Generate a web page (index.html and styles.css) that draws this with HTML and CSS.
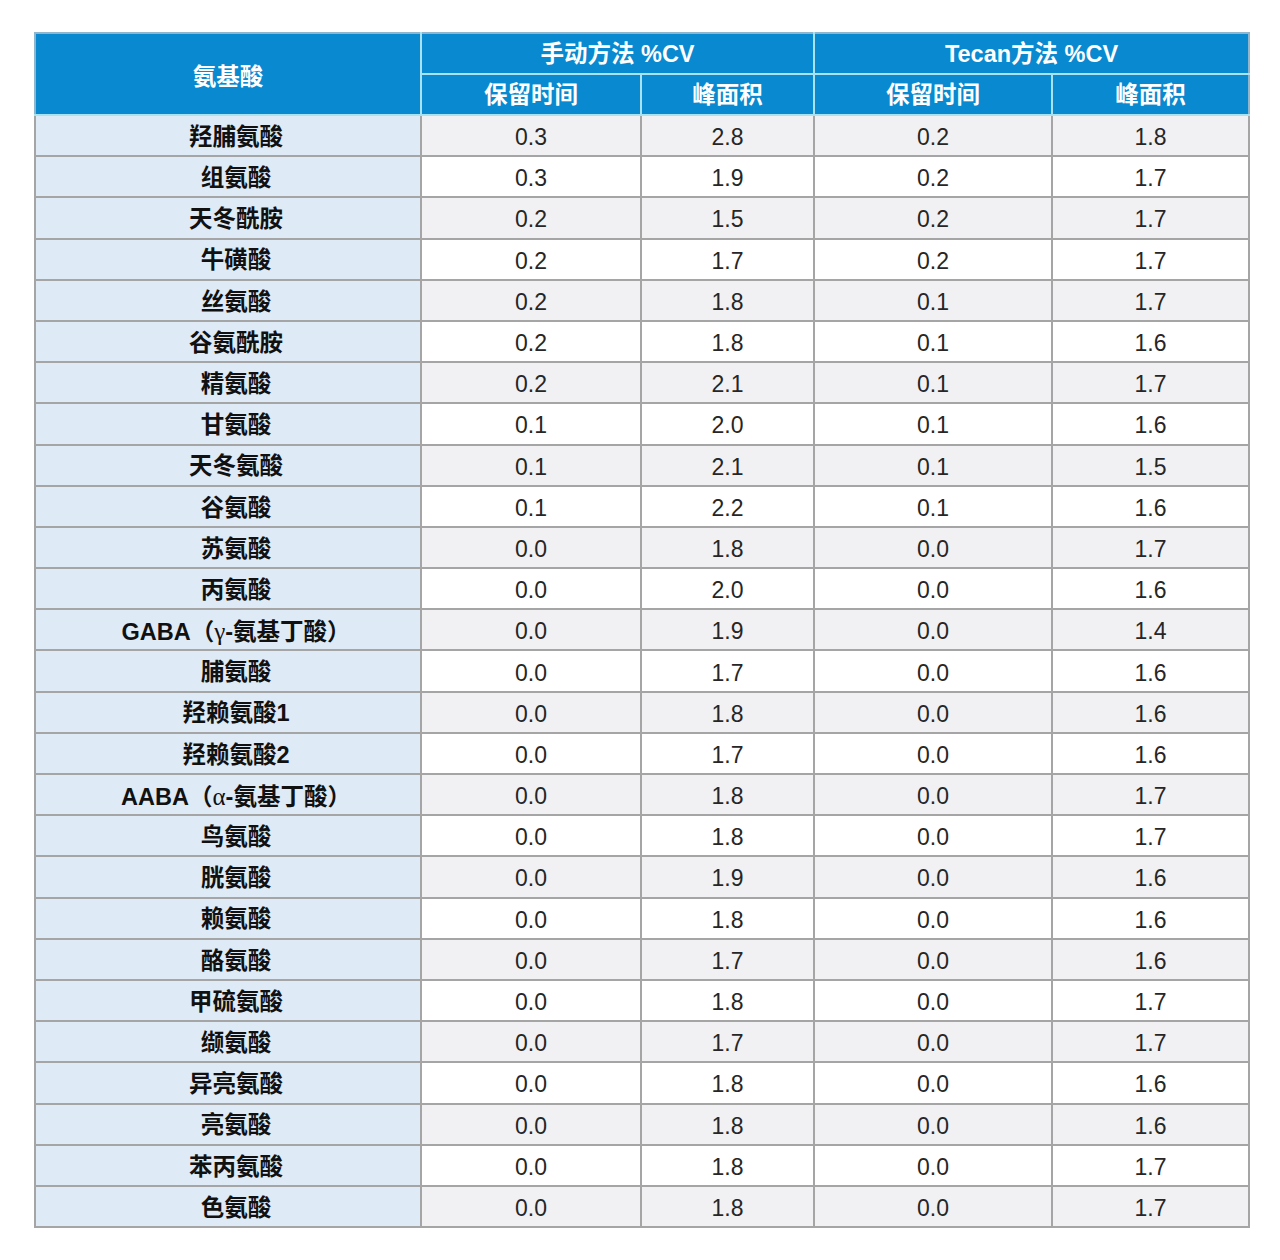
FILE: index.html
```html
<!DOCTYPE html>
<html lang="zh-CN">
<head>
<meta charset="utf-8">
<title>氨基酸 %CV</title>
<link rel="stylesheet" href="styles.css">
</head>
<body>
<table class="cv-table">
  <colgroup>
    <col class="c-name"><col class="c-a"><col class="c-b"><col class="c-c"><col class="c-d">
  </colgroup>
  <thead>
    <tr>
      <th rowspan="2" class="head-name">氨基酸</th>
      <th colspan="2">手动方法 %CV</th>
      <th colspan="2">Tecan方法 %CV</th>
    </tr>
    <tr>
      <th>保留时间</th><th>峰面积</th><th>保留时间</th><th>峰面积</th>
    </tr>
  </thead>
  <tbody>
    <tr><td class="name">羟脯氨酸</td><td>0.3</td><td>2.8</td><td>0.2</td><td>1.8</td></tr>
    <tr><td class="name">组氨酸</td><td>0.3</td><td>1.9</td><td>0.2</td><td>1.7</td></tr>
    <tr><td class="name">天冬酰胺</td><td>0.2</td><td>1.5</td><td>0.2</td><td>1.7</td></tr>
    <tr><td class="name">牛磺酸</td><td>0.2</td><td>1.7</td><td>0.2</td><td>1.7</td></tr>
    <tr><td class="name">丝氨酸</td><td>0.2</td><td>1.8</td><td>0.1</td><td>1.7</td></tr>
    <tr><td class="name">谷氨酰胺</td><td>0.2</td><td>1.8</td><td>0.1</td><td>1.6</td></tr>
    <tr><td class="name">精氨酸</td><td>0.2</td><td>2.1</td><td>0.1</td><td>1.7</td></tr>
    <tr><td class="name">甘氨酸</td><td>0.1</td><td>2.0</td><td>0.1</td><td>1.6</td></tr>
    <tr><td class="name">天冬氨酸</td><td>0.1</td><td>2.1</td><td>0.1</td><td>1.5</td></tr>
    <tr><td class="name">谷氨酸</td><td>0.1</td><td>2.2</td><td>0.1</td><td>1.6</td></tr>
    <tr><td class="name">苏氨酸</td><td>0.0</td><td>1.8</td><td>0.0</td><td>1.7</td></tr>
    <tr><td class="name">丙氨酸</td><td>0.0</td><td>2.0</td><td>0.0</td><td>1.6</td></tr>
    <tr><td class="name">GABA（<span class="greek">γ</span>-氨基丁酸）</td><td>0.0</td><td>1.9</td><td>0.0</td><td>1.4</td></tr>
    <tr><td class="name">脯氨酸</td><td>0.0</td><td>1.7</td><td>0.0</td><td>1.6</td></tr>
    <tr><td class="name">羟赖氨酸1</td><td>0.0</td><td>1.8</td><td>0.0</td><td>1.6</td></tr>
    <tr><td class="name">羟赖氨酸2</td><td>0.0</td><td>1.7</td><td>0.0</td><td>1.6</td></tr>
    <tr><td class="name">AABA（<span class="greek">α</span>-氨基丁酸）</td><td>0.0</td><td>1.8</td><td>0.0</td><td>1.7</td></tr>
    <tr><td class="name">鸟氨酸</td><td>0.0</td><td>1.8</td><td>0.0</td><td>1.7</td></tr>
    <tr><td class="name">胱氨酸</td><td>0.0</td><td>1.9</td><td>0.0</td><td>1.6</td></tr>
    <tr><td class="name">赖氨酸</td><td>0.0</td><td>1.8</td><td>0.0</td><td>1.6</td></tr>
    <tr><td class="name">酪氨酸</td><td>0.0</td><td>1.7</td><td>0.0</td><td>1.6</td></tr>
    <tr><td class="name">甲硫氨酸</td><td>0.0</td><td>1.8</td><td>0.0</td><td>1.7</td></tr>
    <tr><td class="name">缬氨酸</td><td>0.0</td><td>1.7</td><td>0.0</td><td>1.7</td></tr>
    <tr><td class="name">异亮氨酸</td><td>0.0</td><td>1.8</td><td>0.0</td><td>1.6</td></tr>
    <tr><td class="name">亮氨酸</td><td>0.0</td><td>1.8</td><td>0.0</td><td>1.6</td></tr>
    <tr><td class="name">苯丙氨酸</td><td>0.0</td><td>1.8</td><td>0.0</td><td>1.7</td></tr>
    <tr><td class="name">色氨酸</td><td>0.0</td><td>1.8</td><td>0.0</td><td>1.7</td></tr>
  </tbody>
</table>
</body>
</html>
```

FILE: styles.css
```css
html, body {
  margin: 0;
  padding: 0;
  background: #ffffff;
}

body {
  padding: 32px 0 0 34px;
  font-family: "Liberation Sans", Arial, "Noto Sans CJK SC", sans-serif;
}

.cv-table {
  border-collapse: collapse;
  table-layout: fixed;
  width: 1214px;
}

.c-name { width: 386px; }
.c-a { width: 220px; }
.c-b { width: 173px; }
.c-c { width: 238px; }
.c-d { width: 197px; }

.cv-table thead tr {
  height: 41px;
}

.cv-table th {
  background: #0989d0;
  color: #ffffff;
  font-family: "Liberation Sans", Arial, "Noto Sans CJK SC", sans-serif;
  font-weight: bold;
  font-size: 23.5px;
  line-height: 1;
  padding: 3px 0 0 0;
  text-align: center;
  vertical-align: middle;
  border: 2px solid #a9e3f2;
  border-top-color: #8fb6cc;
}

.cv-table th.head-name {
  padding-top: 8px;
  border-left-color: #8fb6cc;
}

.cv-table thead tr:first-child th:last-child,
.cv-table thead tr:last-child th:last-child {
  border-right-color: #8fb6cc;
}

.cv-table tbody tr {
  height: 41.2px;
}

.cv-table td {
  padding: 4px 0 0 0;
  text-align: center;
  vertical-align: middle;
  font-size: 23px;
  line-height: 1;
  color: #262626;
  border: 2px solid #a5a5a5;
  background: #ffffff;
}

.cv-table tbody tr:nth-child(odd) td {
  background: #f1f1f4;
}

.cv-table td.name,
.cv-table tbody tr:nth-child(odd) td.name {
  background: #deeaf6;
  font-weight: bold;
  color: #111111;
  font-size: 23.5px;
  padding-left: 16px;
}

.greek {
  font-family: "Liberation Serif", "Times New Roman", serif;
  font-weight: normal;
  font-size: 25px;
}
```
